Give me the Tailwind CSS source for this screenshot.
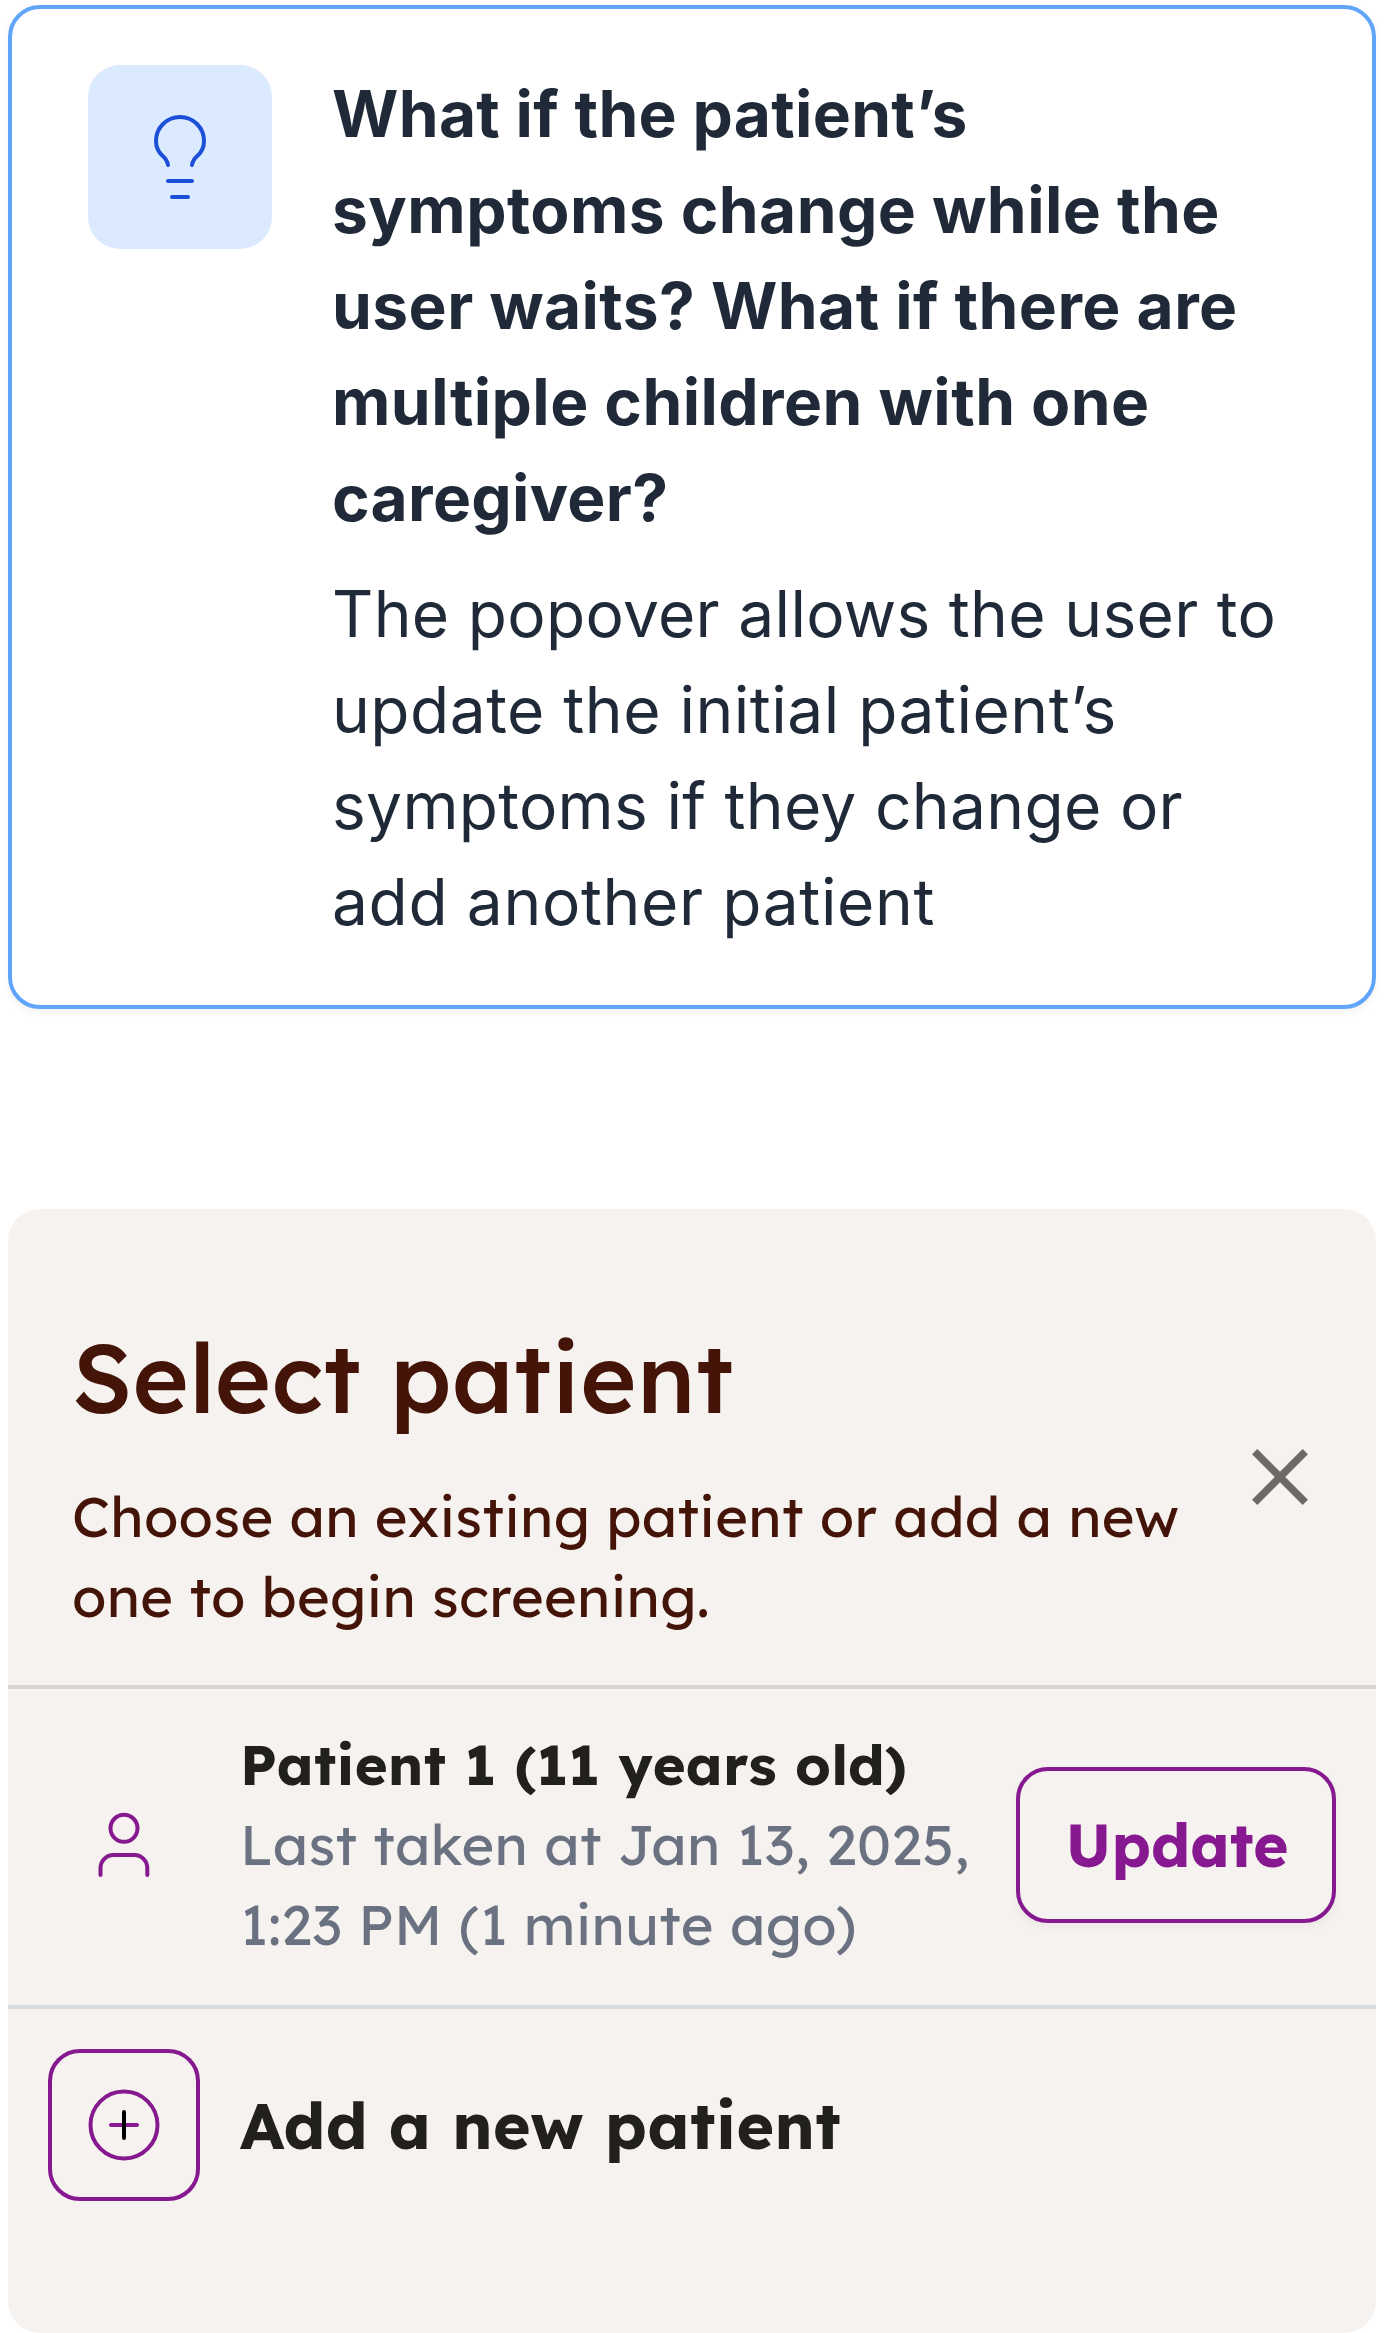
<!DOCTYPE html>
<html lang="en">
<head>
<meta charset="utf-8">
<title>Select patient</title>
<script src="https://cdn.jsdelivr.net/npm/@tailwindcss/browser@4"></script>
</head>
<body class="bg-white">
<main class="flex h-[2333px] flex-col gap-[200px] px-2 pt-[5px]">

  <section class="flex h-[1004px] shrink-0 items-start gap-[60px] rounded-[32px] border-4 border-[#60a5fa] bg-white pt-14 pr-14 pl-[76px] font-['Inter',sans-serif] text-[64px] leading-[96px] tracking-[0.005em] text-[#1f2937] shadow-[0_4px_8px_rgba(0,0,0,0.05)]">
    <div class="flex size-[184px] shrink-0 items-center justify-center rounded-[32px] bg-[#dbeafe]">
      <svg class="size-24" viewBox="132 109 96 96" fill="none" stroke="#1d4ed8" stroke-width="4" stroke-linecap="round" stroke-linejoin="round">
        <path d="M168 165C167.400 161.500 165.600 158.500 162.500 155.800C158.500 152.200 156 147.500 156 141A24 24 0 0 1 204 141C204 147.500 201.500 152.200 197.500 155.800C194.400 158.500 192.600 161.500 192 165"/>
        <path d="M168 181H192M172 197H188"/>
      </svg>
    </div>
    <div class="flex w-[980px] flex-col gap-5 pt-px">
      <h2 class="font-bold">What if the patient’s<br><span class="tracking-[0.007em]">symptoms change while the<br>user waits? What if there are<br>multiple children with one</span><br>caregiver?</h2>
      <p>The popover allows the user to<br><span class="tracking-[0.008em]">update the initial patient’s</span><br>symptoms if they change or<br><span class="tracking-[0.010em]">add another patient</span></p>
    </div>
  </section>

  <section class="flex h-[1124px] shrink-0 flex-col rounded-[32px] bg-[#f6f2ef] font-['Lexend','Inter',sans-serif]">
    <header class="flex h-[480px] items-start justify-between border-b-4 border-[#d8d4d0] pt-24 pr-12 pl-16 text-[#431407]">
      <div class="flex flex-col gap-[27px] whitespace-nowrap">
        <h1 class="text-[96px] leading-[144px] font-medium tracking-[0.0045em]">Select patient</h1>
        <p class="text-[56px] leading-20 tracking-[0.005em]">Choose an existing patient or add a new<br>one to begin screening.</p>
      </div>
      <svg class="mt-[124px] size-24 shrink-0" viewBox="0 0 96 96" fill="none" stroke="#6b6a67" stroke-width="7.500">
        <path d="M22.700 22.700L73.300 73.300M73.300 22.700L22.700 73.300"/>
      </svg>
    </header>

    <div class="flex h-[320px] items-center gap-10 border-b-4 border-[#d8dade] pr-10 pb-1 pl-10">
      <div class="flex w-[152px] shrink-0 items-center justify-center">
        <svg class="size-24" viewBox="76 1797 96 96" fill="none" stroke="#86198f" stroke-width="4" stroke-linecap="round" stroke-linejoin="round">
          <circle cx="124" cy="1828.300" r="13.500"/>
          <path d="M100.500 1875V1868A13 13 0 0 1 113.500 1855H134.300A13 13 0 0 1 147.300 1868V1875"/>
        </svg>
      </div>
      <div class="flex-1 pb-0.5 text-[56px] leading-20 tracking-[0.0053em] whitespace-nowrap">
        <h3 class="font-bold text-[#21201c]">Patient 1 (11 years old)</h3>
        <p class="text-[#6a7282]">Last taken at Jan 13, 2025,<br>1:23 PM (1 minute ago)</p>
      </div>
      <button class="h-[156px] w-[320px] shrink-0 rounded-[32px] border-4 border-[#86198f] bg-[#f6f2ef] pl-0.5 text-[60px] leading-20 font-bold text-[#86198f] shadow-[0_4px_8px_rgba(0,0,0,0.05)]">Update</button>
    </div>

    <div class="flex items-center gap-10 px-10 pt-10">
      <button class="flex size-[152px] shrink-0 items-center justify-center rounded-[32px] border-4 border-[#86198f]">
        <svg class="size-24" viewBox="0 0 96 96" fill="none" stroke-width="4" stroke-linecap="round">
          <circle cx="48" cy="48" r="33.500" stroke="#86198f"/>
          <path d="M35 48H61" stroke="#86198f"/>
          <path d="M48 35V61" stroke="#000"/>
        </svg>
      </button>
      <span class="text-[64px] leading-24 font-bold tracking-[0.0055em] text-[#21201c]">Add a new patient</span>
    </div>
  </section>
</main>
</body>
</html>
